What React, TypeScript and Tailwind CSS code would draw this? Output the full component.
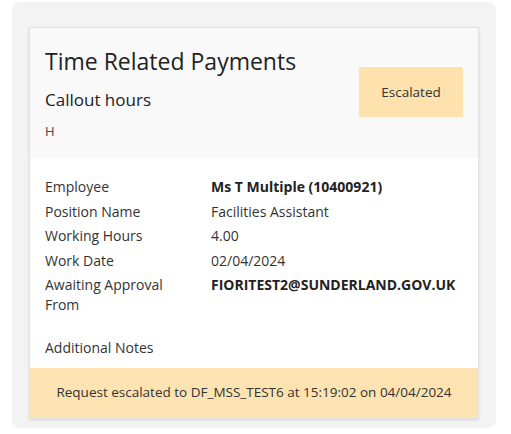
const rows: { label: string; value: string; bold?: boolean }[] = [
  { label: "Employee", value: "Ms T Multiple (10400921)", bold: true },
  { label: "Position Name", value: "Facilities Assistant" },
  { label: "Working Hours", value: "4.00" },
  { label: "Work Date", value: "02/04/2024" },
  { label: "Awaiting Approval From", value: "FIORITEST2@SUNDERLAND.GOV.UK", bold: true },
];

const App = () => {
  return (
    <div
      className="w-[511px] h-[434px] bg-white pt-[2px] pl-[12px]"
      style={{ fontFamily: '"Open Sans", "Noto Sans", sans-serif' }}
    >
      <div className="w-[484px] h-[426px] bg-[#f3f3f3] rounded-lg pt-[25px] pl-[17px]">
        <div className="w-[450px] border border-[#e3e3e3] bg-white shadow-sm">
          {/* Header */}
          <div className="bg-[#f9f9f9] h-[130px] flex justify-between px-[15px] pt-[18px]">
            <div className="flex flex-col text-[#222]">
              <div className="text-[23px] leading-[30px]">Time Related Payments</div>
              <div className="text-[17px] leading-[24px] mt-[12px]">Callout hours</div>
              <div className="text-[13px] leading-[18px] mt-[10px] text-[#444]">H</div>
            </div>
            <div className="w-[104px] h-[50px] bg-[#fde2ae] flex items-center justify-center text-[13.5px] text-[#333] mt-[21px]">
              Escalated
            </div>
          </div>

          {/* Details */}
          <div className="px-[15px] pt-[19px] pb-[8px] text-[14px] text-[#333]">
            {rows.map((r) => (
              <div key={r.label} className="flex leading-[19.5px] mb-[5px]">
                <div className="w-[166px] shrink-0 pr-[40px]">{r.label}</div>
                <div className={r.bold ? "font-bold text-[#222]" : ""}>{r.value}</div>
              </div>
            ))}
            <div className="leading-[19.5px] mt-[24px] mb-[2px]">Additional Notes</div>
          </div>

          {/* Footer */}
          <div className="h-[50px] bg-[#fde3b1] flex items-center justify-center text-[13.5px] text-[#333]">
            Request escalated to DF_MSS_TEST6 at 15:19:02 on 04/04/2024
          </div>
        </div>
      </div>
    </div>
  );
};

export default App;
